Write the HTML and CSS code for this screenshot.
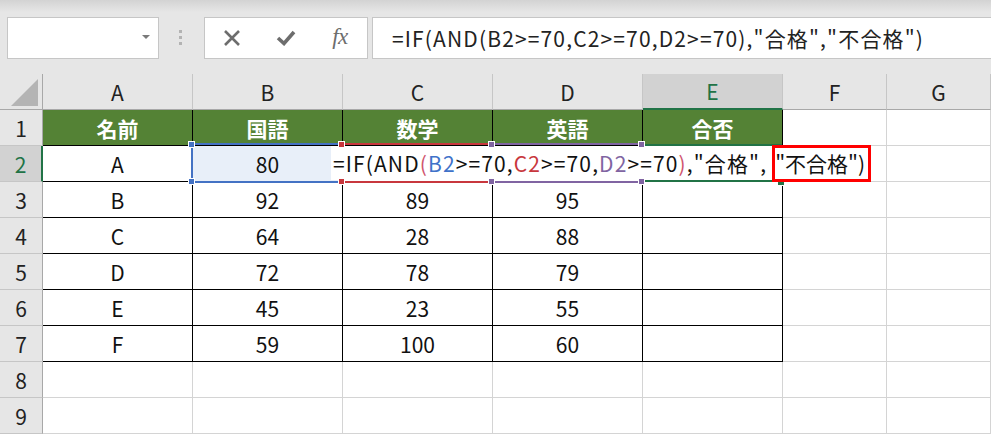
FILE: index.html
```html
<!DOCTYPE html>
<html lang="ja">
<head>
<meta charset="utf-8">
<link rel="stylesheet" href="styles.css">
</head>
<body>
<div class="app">
  <div class="topbar">
    <div class="namebox"><span class="caret"></span></div>
    <div class="grip"><i></i><i></i><i></i></div>
    <div class="fbtns">
      <span class="fbtn"><svg width="18" height="16" viewBox="0 0 18 16"><path d="M2 1 L16 15 M16 1 L2 15" stroke="#6d6d6d" stroke-width="2.6" fill="none"/></svg></span>
      <span class="fbtn"><svg width="20" height="16" viewBox="0 0 20 16"><path d="M2 8 L8 13.5 L18 2" stroke="#6d6d6d" stroke-width="3.6" fill="none"/></svg></span>
      <span class="fbtn fx">fx</span>
    </div>
    <div class="fbox"><span class="ftext">=IF(AND(B2&gt;=70,C2&gt;=70,D2&gt;=70),"合格","不合格")</span></div>
  </div>
  <div class="sheet">
    <div class="corner"><span class="tri"></span></div>
    <div class="ch">A</div><div class="ch">B</div><div class="ch">C</div><div class="ch">D</div><div class="ch ch-sel">E</div><div class="ch">F</div><div class="ch">G</div>

    <div class="rh">1</div>
    <div class="c tb hd">名前</div><div class="c tb hd">国語</div><div class="c tb hd">数学</div><div class="c tb hd">英語</div><div class="c tb hd">合否</div><div class="c"></div><div class="c"></div>

    <div class="rh rh-sel">2</div>
    <div class="c tb">A</div><div class="c tb b2">80</div><div class="c tb"></div><div class="c tb"></div><div class="c tb"></div><div class="c"></div><div class="c"></div>

    <div class="rh">3</div>
    <div class="c tb">B</div><div class="c tb">92</div><div class="c tb">89</div><div class="c tb">95</div><div class="c tb"></div><div class="c"></div><div class="c"></div>

    <div class="rh">4</div>
    <div class="c tb">C</div><div class="c tb">64</div><div class="c tb">28</div><div class="c tb">88</div><div class="c tb"></div><div class="c"></div><div class="c"></div>

    <div class="rh">5</div>
    <div class="c tb">D</div><div class="c tb">72</div><div class="c tb">78</div><div class="c tb">79</div><div class="c tb"></div><div class="c"></div><div class="c"></div>

    <div class="rh">6</div>
    <div class="c tb">E</div><div class="c tb">45</div><div class="c tb">23</div><div class="c tb">55</div><div class="c tb"></div><div class="c"></div><div class="c"></div>

    <div class="rh">7</div>
    <div class="c tb">F</div><div class="c tb">59</div><div class="c tb">100</div><div class="c tb">60</div><div class="c tb"></div><div class="c"></div><div class="c"></div>

    <div class="rh">8</div>
    <div class="c"></div><div class="c"></div><div class="c"></div><div class="c"></div><div class="c"></div><div class="c"></div><div class="c"></div>

    <div class="rh">9</div>
    <div class="c"></div><div class="c"></div><div class="c"></div><div class="c"></div><div class="c"></div><div class="c"></div><div class="c"></div>

    <div class="rng rng-b"></div>
    <div class="rng rng-c"></div>
    <div class="rng rng-d"></div>
    <div class="act-top"></div>
    <div class="act-bot"></div>
    <div class="editbox"><span>=IF(AND</span><span class="k-p">(</span><span class="k-b">B2</span><span>&gt;=70,</span><span class="k-c">C2</span><span>&gt;=70,</span><span class="k-d">D2</span><span>&gt;=70</span><span class="k-p">)</span><span>,"合格",</span><span class="inbox">"不合格")</span></div>
    <div class="hdl h-b1"></div><div class="hdl h-b2"></div>
    <div class="hdl h-c1"></div><div class="hdl h-c2"></div>
    <div class="hdl h-d1"></div><div class="hdl h-d2"></div>
    <div class="hdl h-e1"></div><div class="hdl h-e2"></div>
    <div class="fill-h"></div>
    <div class="redbox"></div>
  </div>
</div>
</body>
</html>
```

FILE: styles.css
```css
html, body {
  margin: 0;
  padding: 0;
}
body {
  width: 991px;
  height: 434px;
  overflow: hidden;
  background: #e6e6e6;
  font-family: "Noto Sans CJK JP", "Noto Sans", sans-serif;
  color: #111;
}
.app {
  width: 991px;
  height: 434px;
  overflow: hidden;
}
.topbar {
  height: 74px;
  box-sizing: border-box;
  padding: 17px 0 0 7px;
  display: flex;
  align-items: flex-start;
  background: linear-gradient(#d3d3d3 0, #e6e6e6 12px);
}
.namebox {
  width: 152px;
  height: 42px;
  box-sizing: border-box;
  border: 1px solid #c6c6c6;
  background: #fff;
  display: flex;
  align-items: center;
  justify-content: flex-end;
  padding-right: 8px;
}
.caret {
  width: 0;
  height: 0;
  border-left: 4px solid transparent;
  border-right: 4px solid transparent;
  border-top: 4px solid #7a7a7a;
  margin-top: -2px;
}
.grip {
  margin-left: 20px;
  width: 3px;
  display: flex;
  flex-direction: column;
  gap: 3px;
  padding-top: 13px;
}
.grip i {
  display: block;
  width: 3px;
  height: 3px;
  background: #b3b3b3;
}
.fbtns {
  margin-left: 22px;
  width: 164px;
  height: 42px;
  box-sizing: border-box;
  border: 1px solid #c6c6c6;
  background: #fff;
  display: grid;
  grid-template-columns: 54px 54px 54px;
  align-items: center;
  justify-items: center;
}
.fbtn {
  display: flex;
  align-items: center;
  justify-content: center;
}
.fx {
  font-family: "Liberation Serif", serif;
  font-style: italic;
  font-size: 23px;
  color: #6d6d6d;
  letter-spacing: -0.5px;
  margin-top: -3px;
}
.fbox {
  margin-left: 4px;
  flex: 1;
  margin-right: -30px;
  height: 42px;
  box-sizing: border-box;
  border: 1px solid #c6c6c6;
  background: #fff;
  display: flex;
  align-items: center;
  padding-left: 19px;
  font-size: 21px;
  letter-spacing: 1.15px;
  color: #222;
  white-space: nowrap;
}
.sheet {
  position: relative;
  display: grid;
  grid-template-columns: 43px 150px 150px 150px 150px 140px 104px 104px;
  grid-template-rows: repeat(10, 36px);
  background: #fff;
}
.corner, .ch, .rh, .c {
  box-sizing: border-box;
}
.corner {
  background: #e6e6e6;
  border-right: 1px solid #a8a8a8;
  border-bottom: 1px solid #a8a8a8;
  position: relative;
}
.tri {
  position: absolute;
  right: 4px;
  bottom: 3px;
  width: 0;
  height: 0;
  border-left: 27px solid transparent;
  border-bottom: 27px solid #b4b4b4;
}
.ch {
  background: #e6e6e6;
  border-right: 1px solid #c6c6c6;
  border-bottom: 1px solid #a8a8a8;
  display: flex;
  align-items: center;
  justify-content: center;
  font-size: 21px;
  color: #222;
}
.ch-sel {
  background: #d2d2d2;
  color: #217346;
  border-bottom: 2px solid #217346;
}
.rh {
  background: #e6e6e6;
  border-right: 1px solid #a8a8a8;
  border-bottom: 1px solid #c6c6c6;
  display: flex;
  align-items: center;
  justify-content: center;
  font-size: 21px;
  color: #222;
}
.rh-sel {
  background: #d2d2d2;
  color: #217346;
  border-right: 2px solid #217346;
}
.c {
  border-right: 1px solid #d4d4d4;
  border-bottom: 1px solid #d4d4d4;
  display: flex;
  align-items: center;
  justify-content: center;
  font-size: 21px;
  color: #111;
}
.tb {
  border-right-color: #000;
  border-bottom-color: #000;
}
.hd {
  background: #548235;
  color: #fff;
  font-weight: bold;
}
.b2 {
  background: #e8eff9;
}
.rng {
  position: absolute;
  top: 69px;
  height: 40px;
  width: 153px;
  box-sizing: border-box;
  border: 2px solid;
}
.rng-b { left: 191px; border-color: #4472c4; }
.rng-c { left: 341px; border-color: #c8373d; }
.rng-d { left: 491px; border-color: #8064a2; }
.act-top, .act-bot {
  position: absolute;
  left: 643px;
  width: 139px;
  height: 2px;
  background: #217346;
}
.act-top { top: 70px; }
.act-bot { top: 106px; }
.editbox {
  position: absolute;
  left: 331px;
  top: 72px;
  width: 540px;
  height: 34px;
  background: #fff;
  display: flex;
  align-items: center;
  padding-left: 2px;
  box-sizing: border-box;
  font-size: 21px;
  letter-spacing: 1.12px;
  color: #111;
  white-space: nowrap;
}
.inbox {
  margin-left: 8px;
  letter-spacing: 0;
}
.k-p { color: #d0546e; }
.k-b { color: #3f72c9; }
.k-c { color: #c8373d; }
.k-d { color: #8064a2; }
.hdl {
  position: absolute;
  width: 5px;
  height: 5px;
  border: 1px solid #fff;
}
.h-b1 { left: 188px; top: 67px; background: #4472c4; }
.h-b2 { left: 188px; top: 104px; background: #4472c4; }
.h-c1 { left: 338px; top: 67px; background: #c8373d; }
.h-c2 { left: 338px; top: 104px; background: #c8373d; }
.h-d1 { left: 488px; top: 67px; background: #8064a2; }
.h-d2 { left: 488px; top: 104px; background: #8064a2; }
.h-e1 { left: 638px; top: 67px; background: #8064a2; }
.h-e2 { left: 638px; top: 104px; background: #8064a2; }
.fill-h {
  position: absolute;
  left: 777px;
  top: 104px;
  width: 6px;
  height: 6px;
  background: #217346;
  border: 1px solid #fff;
}
.redbox {
  position: absolute;
  left: 772px;
  top: 71px;
  width: 99px;
  height: 37px;
  box-sizing: border-box;
  border: 3px solid #ff0000;
}
```
